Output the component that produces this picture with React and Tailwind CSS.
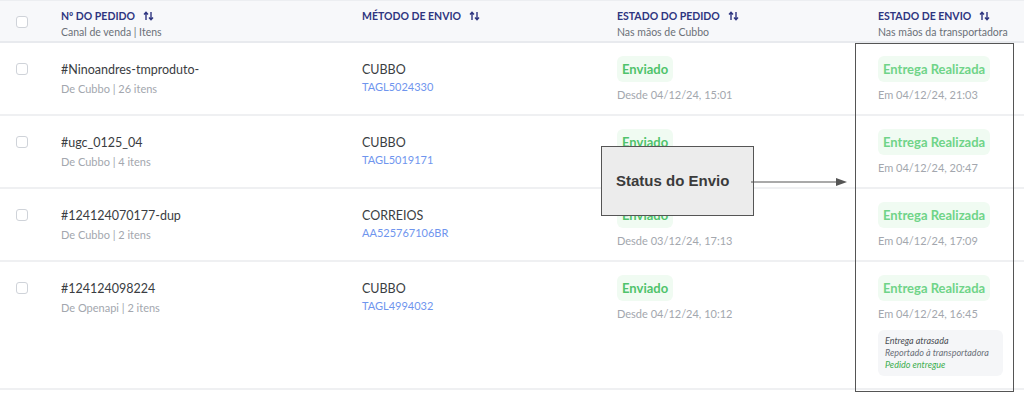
import React from 'react';

const font = { fontFamily: 'Lato, "Open Sans", sans-serif' };

const SortIcon = () => (
  <svg width="11" height="10" viewBox="0 0 11 10" className="ml-2 inline-block" fill="none" stroke="#2e3580" strokeWidth="1.4">
    <path d="M3 9V1.5M1 3.5L3 1.3L5 3.5" />
    <path d="M8 1V8.5M6 6.5L8 8.7L10 6.5" />
  </svg>
);

const Checkbox = () => <div className="w-3 h-3 rounded-[3px] border border-[#cfd3d9] bg-white" />;

const rows = [
  { id: '#Ninoandres-tmproduto-', canal: 'De Cubbo | 26 itens', metodo: 'CUBBO', track: 'TAGL5024330', desde: 'Desde 04/12/24, 15:01', em: 'Em 04/12/24, 21:03' },
  { id: '#ugc_0125_04', canal: 'De Cubbo | 4 itens', metodo: 'CUBBO', track: 'TAGL5019171', desde: 'Desde 04/12/24, 14:40', em: 'Em 04/12/24, 20:47' },
  { id: '#124124070177-dup', canal: 'De Cubbo | 2 itens', metodo: 'CORREIOS', track: 'AA525767106BR', desde: 'Desde 03/12/24, 17:13', em: 'Em 04/12/24, 17:09' },
  { id: '#124124098224', canal: 'De Openapi | 2 itens', metodo: 'CUBBO', track: 'TAGL4994032', desde: 'Desde 04/12/24, 10:12', em: 'Em 04/12/24, 16:45', note: true },
];

const cols = 'grid grid-cols-[61px_301px_255px_261px_146px]';

export default function App() {
  return (
    <div className="relative w-[1024px] h-[393px] bg-white overflow-hidden" style={font}>
      <div className={`${cols} h-[43px] bg-[#f7f8fa] border-t border-[#eceef1] border-b-2 border-b-[#e8eaee]`}>
        <div className="pl-4 pt-[15px]"><Checkbox /></div>
        <div className="pt-[7px]">
          <div className="flex items-center text-[10.5px] font-bold text-[#2e3580] leading-4">Nº DO PEDIDO <SortIcon /></div>
          <div className="text-[10.5px] text-[#6b7078] leading-4">Canal de venda | Itens</div>
        </div>
        <div className="pt-[7px]">
          <div className="flex items-center text-[10.5px] font-bold text-[#2e3580] leading-4">MÉTODO DE ENVIO <SortIcon /></div>
        </div>
        <div className="pt-[7px]">
          <div className="flex items-center text-[10.5px] font-bold text-[#2e3580] leading-4">ESTADO DO PEDIDO <SortIcon /></div>
          <div className="text-[10.5px] text-[#6b7078] leading-4">Nas mãos de Cubbo</div>
        </div>
        <div className="pt-[7px]">
          <div className="flex items-center text-[10.5px] font-bold text-[#2e3580] leading-4">ESTADO DE ENVIO <SortIcon /></div>
          <div className="text-[10.5px] text-[#6b7078] leading-4">Nas mãos da transportadora</div>
        </div>
      </div>
      {rows.map((r) => (
        <div key={r.id} className={`${cols} border-b-2 border-[#eff0f2] ${r.note ? 'h-[128px]' : 'h-[73px]'}`}>
          <div className="pl-4 pt-[20px]"><Checkbox /></div>
          <div className="pt-[18px]">
            <div className="text-[12.5px] text-[#3a3d42] leading-[17px]">{r.id}</div>
            <div className="text-[11px] text-[#a3a7ae] leading-4 mt-[3px]">{r.canal}</div>
          </div>
          <div className="pt-[18px]">
            <div className="text-[12.5px] text-[#3a3d42] leading-[17px]">{r.metodo}</div>
            <div className="text-[11px] text-[#6f95ee] leading-4 mt-[1px]">{r.track}</div>
          </div>
          <div className="pt-[13px]">
            <span className="inline-block px-[5px] h-[26px] leading-[26px] rounded-md bg-[#f0fbf2] text-[#4fc36b] text-[13px] font-bold">Enviado</span>
            <div className="text-[11px] text-[#a3a7ae] leading-4 mt-[5px]">{r.desde}</div>
          </div>
          <div className="pt-[13px]">
            <span className="inline-block px-[5px] h-[26px] leading-[26px] rounded-md bg-[#f0fbf2] text-[#6fd488] text-[13px] font-bold">Entrega Realizada</span>
            <div className="text-[11px] text-[#a3a7ae] leading-4 mt-[5px]">{r.em}</div>
            {r.note && (
              <div className="mt-[8px] w-[125px] rounded-md bg-[#f5f6f8] px-[7px] py-[5px] text-[9px] italic leading-[12px]">
                <div className="text-[#4b4f56]">Entrega atrasada</div>
                <div className="text-[#6b7078]">Reportado à transportadora</div>
                <div className="text-[#3cae4f]">Pedido entregue</div>
              </div>
            )}
          </div>
        </div>
      ))}

      <div className="absolute left-[855px] top-[43px] w-[159px] h-[349px] border border-[#555]" />
      <div className="absolute left-[601px] top-[146px] w-[153px] h-[70px] bg-[#ececec] border border-[#555] flex items-center pl-[14px]">
        <span className="text-[15px] font-bold text-[#3b3b3b]" style={{ fontFamily: '"Liberation Sans", Arial, sans-serif' }}>Status do Envio</span>
      </div>
      <svg className="absolute left-[750px] top-[176px]" width="100" height="12" viewBox="0 0 100 12">
        <line x1="1" y1="6" x2="88" y2="6" stroke="#555" strokeWidth="1.2" />
        <path d="M86 2L97 6L86 10Z" fill="#555" />
      </svg>
    </div>
  );
}
